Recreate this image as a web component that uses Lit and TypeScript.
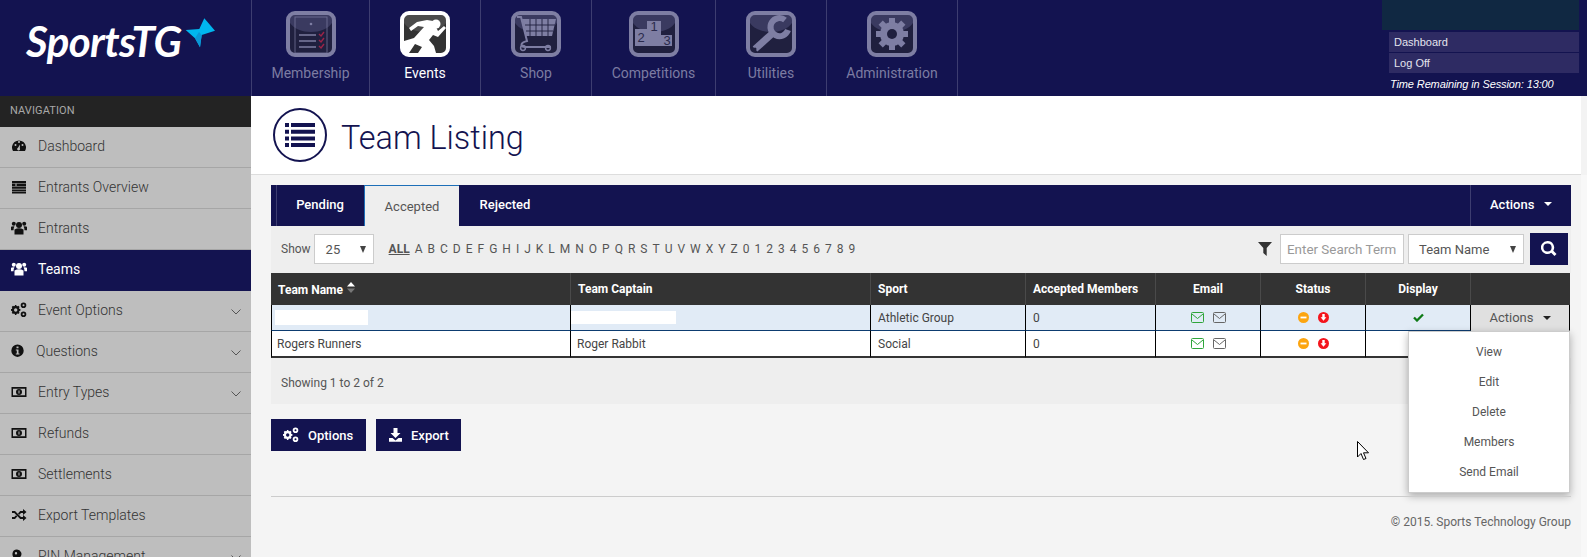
import { LitElement, html, css, svg } from 'lit';
import { customElement } from 'lit/decorators.js';

const frame = svg`
  <rect x="2" y="2" width="46" height="42" rx="7" class="inner"></rect>
  <path class="arc" d="M4 6q0-2 3-2h36q3 0 3 2v6C38 24 12 24 4 12z"></path>
`;

const gearTeeth = [0, 45, 90, 135, 180, 225, 270, 315];

const navIcons: Record<string, unknown> = {
  membership: svg`
    <rect x="9" y="6" width="32" height="36" class="rimThin"></rect>
    <circle cx="25" cy="13" r="1.3" class="solid"></circle>
    <path class="line" d="M13 24h17M13 30h17M13 36h17"></path>
    <path class="tick" d="M33 23l2 2 3-4M33 29l2 2 3-4M33 35l2 2 3-4"></path>`,
  events: svg`
    <path class="solid" d="M4 30L14 27 24 16 18 15 11 20 9 17 17 11 27 9 33 10 38 20 44 15 46 17 38 26 33 24 29 29 34 35 36 42H18L22 36 15 33 9 42H4z"></path>
    <circle cx="36" cy="13" r="4.500" class="solid"></circle>`,
  shop: svg`
    <path class="line2" d="M6 6h4l6 24c-8 2-6 6-2 6h26"></path>
    <path class="solid" d="M11 8h34l-4 17H15z"></path>
    <path class="gridlines" d="M14 14h30M15 20h27M19 8v17M25 8v17M31 8v17M37 8v17"></path>
    <circle cx="12" cy="37" r="2.4" class="wheel"></circle>
    <circle cx="37" cy="37" r="2.4" class="wheel"></circle>`,
  competitions: svg`
    <path class="solid" d="M18 10h14v14h11v11H6V18h12z"></path>
    <text x="25" y="20" class="num">1</text>
    <text x="12" y="31" class="num">2</text>
    <text x="38" y="34" class="num">3</text>`,
  utilities: svg`
    <path class="line7" d="M9 38L28 21"></path>
    <path class="line5" d="M39 9A9 9 0 1 0 42 19"></path>
    <circle cx="9" cy="38" r="1.5" class="inner"></circle>`,
  administration: svg`
    ${gearTeeth.map((a) => svg`<rect x="22" y="7" width="6" height="6" class="solid" transform="rotate(${a} 25 23)"></rect>`)}
    <circle cx="25" cy="23" r="12" class="solid"></circle>
    <circle cx="25" cy="23" r="5" class="inner"></circle>`,
};

const side: Record<string, unknown> = {
  dashboard: svg`<path fill-rule="evenodd" d="M2 13a7 7 0 1 1 12 0zM8 5a1 1 0 1 0 0-2 1 1 0 0 0 0 2zM4.500 8a1 1 0 1 0 0-2 1 1 0 0 0 0 2zM11.500 8a1 1 0 1 0 0-2 1 1 0 0 0 0 2zM9 6.500L7 9.800a1.400 1.400 0 1 0 1.800.5z"></path>`,
  overview: svg`<path d="M1 2h14v2.200H1zM1 4.800h3.500V7H1zM5.500 4.800H15V7H5.500zM1 7.600h14v2.200H1zM1 10.400h14v2H1zM1 13h14v1.500H1z"></path>`,
  users: svg`<circle cx="8" cy="5" r="3"></circle><circle cx="2.800" cy="3.800" r="2"></circle><circle cx="13.200" cy="3.800" r="2"></circle><path d="M3.500 9.500q4.500-2.500 9 0V14.500h-9zM0 6.800q1.800-1 3.500-.3-1 1.200-1 3.700H0zM16 6.800q-1.800-1-3.500-.3 1 1.200 1 3.700H16z"></path>`,
  cogs: svg`<path fill-rule="evenodd" d="M5.500 4l1 .3.8-.6 1.300 1.300-.6.9.4 1 1 .1v1.800l-1 .2-.4.9.6.9-1.300 1.300-.8-.6-1 .4-.2 1H4l-.2-1-1-.4-.8.6L.7 10.800l.6-.9-.4-.9-.9-.2V7l.9-.1.4-1-.6-.9L2 3.700l.8.6 1-.3.2-1h1.300zM4.700 6.300a1.700 1.700 0 1 0 0 3.400 1.700 1.700 0 0 0 0-3.400z"></path><path fill-rule="evenodd" d="M12.500 .5a2.800 2.800 0 1 0 0 5.600 2.800 2.800 0 0 0 0-5.600zm0 1.800a1 1 0 1 1 0 2 1 1 0 0 1 0-2zM12.500 9.500a2.800 2.800 0 1 0 0 5.600 2.800 2.800 0 0 0 0-5.600zm0 1.800a1 1 0 1 1 0 2 1 1 0 0 1 0-2z"></path>`,
  info: svg`<path fill-rule="evenodd" d="M6.500 1.500a6.200 6.200 0 1 0 0 12.400A6.200 6.200 0 0 0 6.500 1.500zM5.500 3.400h2v1.900h-2zM4.800 6.400h2.700v4h1v1.200H4.800v-1.200h1v-2.800h-1z"></path>`,
  money: svg`<path fill-rule="evenodd" d="M.5 3h15v10H.5zM2 4.700v6.600h12V4.700zM8 5a3 3 0 1 1 0 6 3 3 0 0 1 0-6zM7.500 6.500v3h1v-3z"></path>`,
  random: svg`<path d="M1 4h3l6 6h2V8l3.500 3L12 14v-2H9.200L3.300 6H1zM1 10h2.300l1.700-1.700 1.300 1.300L4 12H1zM9.200 4H12V2l3.500 3L12 8V6h-2L8.300 7.700 7 6.400z"></path>`,
  key: svg`<path fill-rule="evenodd" d="M6 1.500a4.500 4.500 0 0 0-1 8.900l1 3.600h4l1-2-2-1 .3-2A4.500 4.500 0 0 0 6 1.500zM5 4a1.200 1.200 0 1 1 0 2.400A1.200 1.200 0 0 1 5 4z"></path>`,
  list: svg`<path d="M0 0h4v4H0zM6 0h24v4H6zM0 6.700h4v4H0zM6 6.700h24v4H6zM0 13.400h4v4H0zM6 13.400h24v4H6zM0 20h4v4H0zM6 20h24v4H6z"></path>`,
  filter: svg`<path d="M0 0h14L8.700 6v8L5.300 11V6z"></path>`,
  search: svg`<path fill-rule="evenodd" d="M6.500 0a6.500 6.500 0 1 0 3.700 11.800L13.500 15l2-2-3.200-3.300A6.500 6.500 0 0 0 6.500 0zm0 2.400a4 4 0 1 1 0 8.200 4 4 0 0 1 0-8.200z"></path>`,
  download: svg`<path d="M5.500 1h4v5h3L7.500 11l-5-5h3zM1 11h3.500l3 2.500 3-2.500H14v3.800H1z"></path>`,
};

const icon = (name: string, w = 16, h = 16, cls = '') =>
  html`<svg class=${cls} width=${w} height=${h} viewBox="0 0 ${w} ${h}" fill="currentColor">${side[name]}</svg>`;

const envelope = (color: string) => html`<svg width="13" height="11" viewBox="0 0 13 11" fill="none" stroke=${color}>
  <rect x=".5" y=".5" width="12" height="10" rx="1"></rect><path d="M1 2l5.500 4.500L12 2"></path></svg>`;

const statusIcons = html`
  <svg width="11" height="11" viewBox="0 0 11 11"><circle cx="5.500" cy="5.500" r="5.500" fill="#fca510"></circle><rect x="2.500" y="4.600" width="6" height="1.800" fill="#fff"></rect></svg>
  <svg width="11" height="11" viewBox="0 0 11 11"><circle cx="5.500" cy="5.500" r="5.500" fill="#f4141c"></circle><path d="M4.300 2h2.400v3.200h1.700L5.500 8.800 2.600 5.200h1.700z" fill="#fff"></path></svg>
`;

const check = html`<svg width="11" height="9" viewBox="0 0 11 9"><path d="M1 4.500l3 3L10 1.500" fill="none" stroke="#0e7a16" stroke-width="2.300"></path></svg>`;

const NAV = [
  { key: 'membership', label: 'Membership', w: 118 },
  { key: 'events', label: 'Events', w: 111, active: true },
  { key: 'shop', label: 'Shop', w: 111 },
  { key: 'competitions', label: 'Competitions', w: 124 },
  { key: 'utilities', label: 'Utilities', w: 111 },
  { key: 'administration', label: 'Administration', w: 131 },
];

const MENU = [
  { key: 'dashboard', label: 'Dashboard' },
  { key: 'overview', label: 'Entrants Overview' },
  { key: 'users', label: 'Entrants' },
  { key: 'users', label: 'Teams', active: true },
  { key: 'cogs', label: 'Event Options', more: true },
  { key: 'info', label: 'Questions', more: true, tight: true },
  { key: 'money', label: 'Entry Types', more: true },
  { key: 'money', label: 'Refunds' },
  { key: 'money', label: 'Settlements' },
  { key: 'random', label: 'Export Templates' },
  { key: 'key', label: 'PIN Management', more: true },
];

const LETTERS = 'ABCDEFGHIJKLMNOPQRSTUVWXYZ0123456789'.split('');

@customElement('app-root')
export class AppRoot extends LitElement {
  static styles = css`
    :host {
      display: block;
      height: 100vh;
      overflow: hidden;
      background: #f4f4f4;
      font-family: Roboto, sans-serif;
      font-size: 12px;
      color: #444;
    }
    * { box-sizing: border-box; }
    svg { display: block; flex: none; }

    /* header */
    .header { display: flex; height: 96px; background: #131350; }
    .logo { width: 251px; flex: none; display: flex; align-items: flex-start; padding: 18px 0 0 26px; }
    .wordmark {
      width: 159px;
      flex: none;
      font-family: Lato, sans-serif;
      font-style: italic;
      font-weight: 700;
      font-size: 42px;
      line-height: 46px;
      letter-spacing: -0.6px;
      color: #fff;
    }
    .topnav { display: flex; border-left: 1px solid #3d3d70; }
    .topitem {
      display: flex;
      flex-direction: column;
      align-items: center;
      padding-top: 11px;
      gap: 8px;
      border-right: 1px solid #3d3d70;
      color: #7c7ca2;
      font-size: 14px;
      line-height: 16px;
    }
    .topitem.on { color: #fff; }
    .topitem svg { --rim: #7e7ea3; --inner: #20203f; --arc: #3a3a60; }
    .topitem.on svg { --rim: #fff; --inner: #333; --arc: #4b4b4b; }
    .inner { fill: var(--inner); }
    .arc { fill: var(--arc); }
    .rim { fill: none; stroke: var(--rim); stroke-width: 4; }
    .rimThin { fill: none; stroke: var(--rim); stroke-width: 1; opacity: 0.7; }
    .solid { fill: var(--rim); }
    .line { stroke: var(--rim); stroke-width: 1.6; fill: none; }
    .line2 { stroke: var(--rim); stroke-width: 2; fill: none; }
    .line5 { stroke: var(--rim); stroke-width: 6; fill: none; }
    .line7 { stroke: var(--rim); stroke-width: 7; fill: none; }
    .tick { stroke: #9c2448; stroke-width: 1.4; fill: none; }
    .gridlines { stroke: var(--inner); stroke-width: 0.9; fill: none; }
    .wheel { fill: none; stroke: var(--rim); stroke-width: 1.5; }
    .num { fill: #2a2a4c; font-size: 13px; text-anchor: middle; font-family: 'Liberation Sans', sans-serif; }
    .session { margin-left: auto; width: 205px; font-family: 'Liberation Sans', sans-serif; font-size: 11px; color: #e4e4ee; }
    .teal { width: 197px; height: 30px; background: #102842; margin-bottom: 2px; }
    .sessionlink { margin: 0 8px 1px 7px; height: 20px; line-height: 20px; padding-left: 5px; background: #2e2b63; }
    .remaining { margin: 3px 0 0 1px; padding-left: 7px; line-height: 16px; font-style: italic; color: #fff; letter-spacing: -0.12px; }

    /* page */
    .body { display: flex; height: 461px; }
    .sidebar { width: 251px; flex: none; background: #bebebe; font-size: 14px; color: #444; }
    .navhead {
      height: 31px;
      padding-left: 10px;
      background: #232323;
      color: #a8a8a8;
      font-size: 11px;
      line-height: 30px;
      letter-spacing: 0.1px;
    }
    .menuitem {
      display: flex;
      align-items: center;
      height: 41px;
      padding: 0 0 3px 11px;
      border-bottom: 1px solid #a6a6a6;
      color: #333;
      font-weight: 300;
    }
    .menuitem svg:first-child { color: #111; }
    .menuitem .label { margin-left: 11px; }
    .menuitem.tight .label { margin-left: 9px; }
    .menuitem.on { background: #131350; color: #fff; border-bottom-color: #131350; font-weight: 400; }
    .menuitem.on svg:first-child { color: #fff; }
    .chev { margin-left: auto; margin-right: 10px; margin-top: 4px; }

    .content { flex: 1; min-width: 0; position: relative; }
    .edge { width: 6px; flex: none; background: linear-gradient(#f3f3f3 79px, #f8f8f8 79px); }
    .titlebar {
      display: flex;
      align-items: center;
      gap: 14px;
      height: 79px;
      padding-left: 22px;
      background: #fff;
      border-bottom: 1px solid #ddd;
      color: #131350;
    }
    .circle {
      display: flex;
      align-items: center;
      justify-content: center;
      width: 54px;
      height: 54px;
      border: 2px solid #131350;
      border-radius: 50%;
    }
    h1 { margin: 5px 0 0; font-size: 32.400px; font-weight: 300; line-height: 40px; }
    .panel { position: relative; margin: 10px 10px 0 20px; }

    .tabs { display: flex; align-items: stretch; height: 41px; background: #131350; color: #fff; font-size: 13px; font-weight: 500; }
    .tab { display: flex; align-items: center; justify-content: center; padding-bottom: 3px; }
    .tab.pending { width: 93px; border-left: 5px solid #131350; box-shadow: inset 1px 0 0 #3d3d70; }
    .tab.accepted { width: 95px; background: #eee; border-top: 1px solid #1d6fb8; border-left: 1px solid #1d6fb8; color: #555; font-weight: 400; padding: 2px 0 1px; }
    .tab.rejected { width: 92px; }
    .tabactions { margin-left: auto; display: flex; align-items: center; gap: 10px; width: 101px; padding: 0 0 3px 19px; border-left: 1px solid #3d3d70; }
    .caret { width: 0; height: 0; border: 4px solid transparent; border-top-color: currentColor; border-bottom: 0; }

    .toolbar { display: flex; align-items: center; height: 47px; padding: 0 3px 1px 10px; background: #eee; color: #555; }
    .field { display: flex; align-items: center; height: 30px; background: #fff; border: 1px solid #ccc; font-size: 13px; color: #555; }
    .select25 { width: 60px; margin-left: 3px; padding: 0 7px 0 11px; justify-content: space-between; }
    .selectname { width: 116px; margin-left: 4px; padding: 0 7px 0 10px; justify-content: space-between; }
    .arrow { width: 0; height: 0; border: 3.500px solid transparent; border-top: 7px solid #444; border-bottom: 0; }
    .letters { display: flex; gap: 5px; margin-left: 15px; font-size: 12px; color: #555; }
    .letters b { font-weight: 700; text-decoration: underline; }
    .spacer { flex: 1; }
    .filter { color: #333; margin-right: 8px; }
    .search { width: 124px; height: 30px; padding: 0 6px; border: 1px solid #ccc; background: #fff; font: 13.400px Roboto, sans-serif; outline: none; }
    .search::placeholder { color: #999; }
    .gobtn { display: flex; align-items: center; justify-content: center; width: 38px; height: 32px; margin-left: 6px; background: #131350; color: #fff; }

    table { width: 1299px; table-layout: fixed; border-collapse: separate; border-spacing: 0; }
    th {
      height: 32px;
      padding: 0 7px;
      background: #333;
      color: #fff;
      font-size: 12px;
      font-weight: 700;
      text-align: left;
      border-right: 1px solid #4a4a4a;
    }
    th:last-child { border-right: 0; }
    td {
      height: 26px;
      padding: 0 3px 0 7px;
      border-right: 1px solid #000;
      border-bottom: 1px solid #0d3c70;
      background: #fff;
      color: #444;
      vertical-align: middle;
    }
    tr.sel td { background: #e1ebf6; }
    tr:last-child td { height: 27px; border-bottom: 2px solid #333; }
    td:first-child { border-left: 1px solid #000; padding-left: 5px; }
    td:nth-child(2) { padding-left: 6px; }
    th.c, td.c { text-align: center; padding-left: 0; padding-right: 0; }
    .pair { display: flex; justify-content: center; gap: 9px; align-items: center; }
    .mask { display: block; height: 15px; background: #fff; }
    td.masked { padding: 0 0 0 3px; }
    td.masked2 { padding: 0; }
    tr.sel td.rowact { background: #e0e0e0; border-bottom-color: #e0e0e0; font-size: 13px; color: #555; }
    .rowactions { display: flex; align-items: center; justify-content: center; gap: 9px; }
    .rowactions .caret { color: #222; }
    .sort { display: inline-block; margin-left: 1px; vertical-align: 1px; }

    .info { height: 46px; padding-left: 10px; background: #eee; line-height: 50px; color: #555; }
    .buttons { display: flex; gap: 10px; margin-top: 15px; }
    .btn { display: flex; align-items: center; height: 32px; background: #131350; color: #fff; font-size: 13px; font-weight: 500; }
    .btn.options { width: 95px; padding-left: 12px; gap: 9px; }
    .btn.export { width: 85px; padding-left: 12px; gap: 8px; }
    hr { margin: 45px 0 0; border: 0; border-top: 1px solid #ccc; }
    .copy { margin-top: 18px; text-align: right; color: #666; line-height: 14px; }

    .dropdown {
      position: absolute;
      top: 146px;
      right: 1px;
      width: 162px;
      padding: 5px 0;
      background: #fff;
      border: 1px solid #ccc;
      box-shadow: 0 3px 8px rgba(0, 0, 0, 0.3);
      text-align: center;
      color: #555;
    }
    .dropdown div { height: 30px; line-height: 30px; }
    .pointer { position: absolute; left: 1086px; top: 256px; }
  `;

  render() {
    return html`
      <div class="header">
        <div class="logo">
          <span class="wordmark">SportsTG</span>
          <svg width="31" height="30" viewBox="0 0 31 30">
            <path fill="#00b6ee" d="M.7 12L14.300 11 19.300 .3 30 12.700 16.700 17 15 29.300 10 20.300z"></path>
            <path fill="#0a97d6" d="M16.700 17L15 29.300 10 20.300 14 14z"></path>
          </svg>
        </div>
        <div class="topnav">
          ${NAV.map(
            (n) => html`<div class="topitem ${n.active ? 'on' : ''}" style="width:${n.w}px">
              <svg width="50" height="46" viewBox="0 0 50 46">${frame}${navIcons[n.key]}
                <rect x="2" y="2" width="46" height="42" rx="7" class="rim"></rect></svg>
              <span>${n.label}</span>
            </div>`
          )}
        </div>
        <div class="session">
          <div class="teal"></div>
          <div class="sessionlink">Dashboard</div>
          <div class="sessionlink">Log Off</div>
          <div class="remaining">Time Remaining in Session: 13:00</div>
        </div>
      </div>
      <div class="body">
        <div class="sidebar">
          <div class="navhead">NAVIGATION</div>
          ${MENU.map(
            (m) => html`<div class="menuitem ${m.active ? 'on' : ''} ${m.tight ? 'tight' : ''}">
              ${icon(m.key)}
              <span class="label">${m.label}</span>
              ${m.more
                ? html`<svg class="chev" width="10" height="6" viewBox="0 0 10 6"><path d="M.5.5L5 5 9.500.5" fill="none" stroke="#555"></path></svg>`
                : ''}
            </div>`
          )}
        </div>
        <div class="content">
          <div class="titlebar">
            <div class="circle">${icon('list', 30, 24)}</div>
            <h1>Team Listing</h1>
          </div>
          <div class="panel">
            <div class="tabs">
              <div class="tab pending">Pending</div>
              <div class="tab accepted">Accepted</div>
              <div class="tab rejected">Rejected</div>
              <div class="tabactions">Actions <span class="caret"></span></div>
            </div>
            <div class="toolbar">
              <span>Show</span>
              <div class="field select25">25 <span class="arrow"></span></div>
              <div class="letters"><b>ALL</b>${LETTERS.map((l) => html`<span>${l}</span>`)}</div>
              <span class="spacer"></span>
              <span class="filter">${icon('filter', 14, 14)}</span>
              <input class="search" placeholder="Enter Search Term" />
              <div class="field selectname">Team Name <span class="arrow"></span></div>
              <div class="gobtn">${icon('search')}</div>
            </div>
            <table>
              <colgroup>
                <col style="width:300px" /><col style="width:300px" /><col style="width:155px" /><col style="width:130px" />
                <col style="width:105px" /><col style="width:105px" /><col style="width:105px" /><col style="width:99px" />
              </colgroup>
              <thead>
                <tr>
                  <th>
                    Team Name
                    <svg class="sort" width="8" height="11" viewBox="0 0 8 11">
                      <path d="M4 0l4 4.500H0z" fill="#fff"></path><path d="M4 11L0 6.500h8z" fill="#777"></path>
                    </svg>
                  </th>
                  <th>Team Captain</th><th>Sport</th><th>Accepted Members</th>
                  <th class="c">Email</th><th class="c">Status</th><th class="c">Display</th><th></th>
                </tr>
              </thead>
              <tbody>
                <tr class="sel">
                  <td class="masked"><span class="mask" style="width:93px"></span></td>
                  <td class="masked2"><span class="mask" style="width:105px;height:13px"></span></td>
                  <td>Athletic Group</td>
                  <td>0</td>
                  <td class="c"><div class="pair">${envelope('#2ea53a')}${envelope('#666')}</div></td>
                  <td class="c"><div class="pair">${statusIcons}</div></td>
                  <td class="c"><div class="pair">${check}</div></td>
                  <td class="c rowact"><div class="rowactions">Actions <span class="caret"></span></div></td>
                </tr>
                <tr>
                  <td>Rogers Runners</td>
                  <td>Roger Rabbit</td>
                  <td>Social</td>
                  <td>0</td>
                  <td class="c"><div class="pair">${envelope('#2ea53a')}${envelope('#666')}</div></td>
                  <td class="c"><div class="pair">${statusIcons}</div></td>
                  <td class="c"></td>
                  <td class="c"></td>
                </tr>
              </tbody>
            </table>
            <div class="info">Showing 1 to 2 of 2</div>
            <div class="dropdown">
              <div>View</div><div>Edit</div><div>Delete</div><div>Members</div><div>Send Email</div>
            </div>
            <svg class="pointer" width="13" height="20" viewBox="0 0 13 20">
              <path d="M.5.5v15.500l3.500-3.500 2.500 6 2.500-1-2.500-5.700h5z" fill="#fff" stroke="#000"></path>
            </svg>
          </div>
          <div class="panel" style="margin-top:0">
            <div class="buttons">
              <div class="btn options">${icon('cogs')} Options</div>
              <div class="btn export">${icon('download', 15, 16)} Export</div>
            </div>
            <hr />
            <div class="copy">© 2015. Sports Technology Group</div>
          </div>
        </div>
        <div class="edge"></div>
      </div>
    `;
  }
}
